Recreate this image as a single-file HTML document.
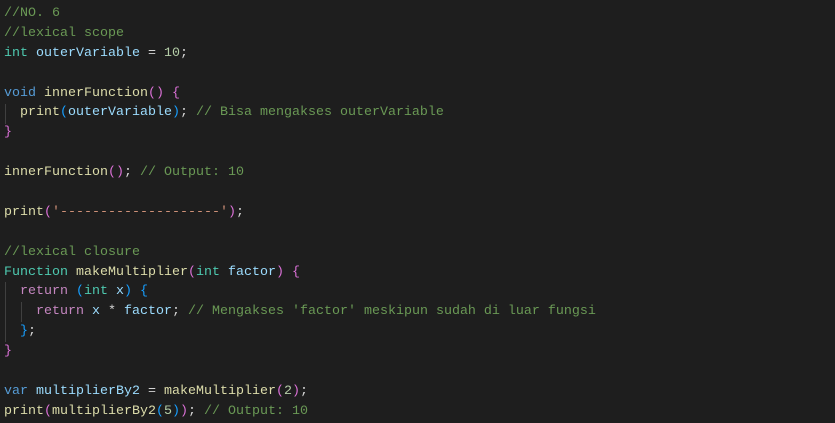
<!DOCTYPE html>
<html><head><meta charset="utf-8"><style>
html,body{margin:0;padding:0;background:#1e1e1e;width:835px;height:423px;overflow:hidden}
.c{position:absolute;left:4px;top:4px;font-family:"Liberation Mono",monospace;font-size:13.33px;color:#d4d4d4}
.l{height:19.9px;line-height:19.9px;white-space:pre}
.cm{color:#6a9955}.t{color:#4ec9b0}.v{color:#9cdcfe}.f{color:#dcdcaa}.n{color:#b5cea8}.k{color:#569cd6}.r{color:#c586c0}.p{color:#da70d6}.b{color:#179fff}.s{color:#ce9178}
.g{position:absolute;width:1px;background:#404040}
</style></head><body>
<div class="g" style="left:5px;top:104px;height:20px"></div>
<div class="g" style="left:5px;top:282px;height:60px"></div>
<div class="g" style="left:21px;top:302px;height:20px"></div>
<div class="c"><div class="l"><span class="cm">//NO. 6</span></div><div class="l"><span class="cm">//lexical scope</span></div><div class="l"><span class="t">int</span> <span class="v">outerVariable</span> = <span class="n">10</span>;</div><div class="l"> </div><div class="l"><span class="k">void</span> <span class="f">innerFunction</span><span class="p">()</span> <span class="p">{</span></div><div class="l">  <span class="f">print</span><span class="b">(</span><span class="v">outerVariable</span><span class="b">)</span>; <span class="cm">// Bisa mengakses outerVariable</span></div><div class="l"><span class="p">}</span></div><div class="l"> </div><div class="l"><span class="f">innerFunction</span><span class="p">()</span>; <span class="cm">// Output: 10</span></div><div class="l"> </div><div class="l"><span class="f">print</span><span class="p">(</span><span class="s">'--------------------'</span><span class="p">)</span>;</div><div class="l"> </div><div class="l"><span class="cm">//lexical closure</span></div><div class="l"><span class="t">Function</span> <span class="f">makeMultiplier</span><span class="p">(</span><span class="t">int</span> <span class="v">factor</span><span class="p">)</span> <span class="p">{</span></div><div class="l">  <span class="r">return</span> <span class="b">(</span><span class="t">int</span> <span class="v">x</span><span class="b">)</span> <span class="b">{</span></div><div class="l">    <span class="r">return</span> <span class="v">x</span> * <span class="v">factor</span>; <span class="cm">// Mengakses 'factor' meskipun sudah di luar fungsi</span></div><div class="l">  <span class="b">}</span>;</div><div class="l"><span class="p">}</span></div><div class="l"> </div><div class="l"><span class="k">var</span> <span class="v">multiplierBy2</span> = <span class="f">makeMultiplier</span><span class="p">(</span><span class="n">2</span><span class="p">)</span>;</div><div class="l"><span class="f">print</span><span class="p">(</span><span class="f">multiplierBy2</span><span class="b">(</span><span class="n">5</span><span class="b">)</span><span class="p">)</span>; <span class="cm">// Output: 10</span></div></div>
</body></html>
